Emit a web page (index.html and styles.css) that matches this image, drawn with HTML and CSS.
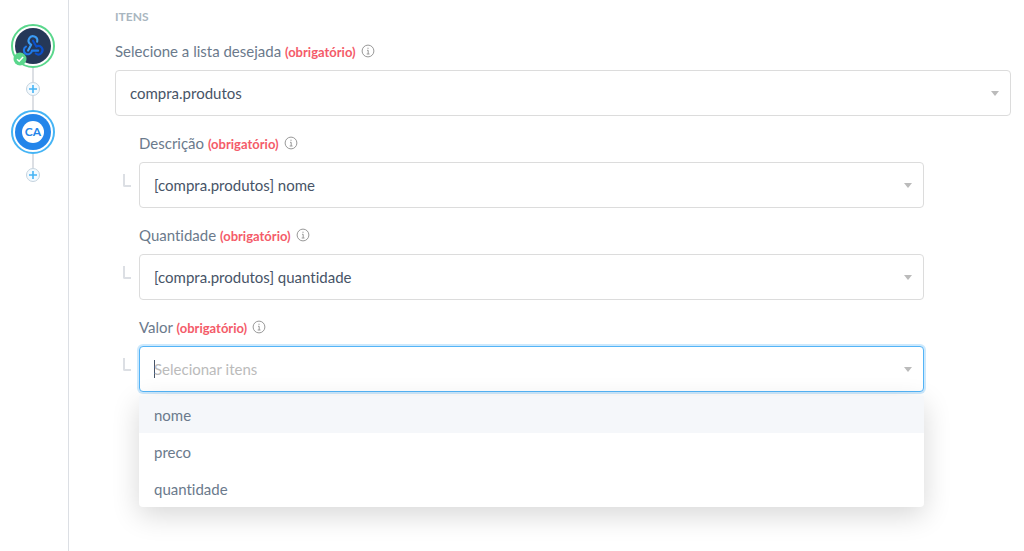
FILE: index.html
```html
<!DOCTYPE html>
<html lang="pt-BR">
<head>
    <meta charset="UTF-8">
    <meta name="viewport" content="width=device-width, initial-scale=1.0">
    <title>Itens</title>
    <link rel="stylesheet" href="styles.css">
</head>
<body>
<aside class="steps">
    <div class="step step-done">
        <svg class="step-icon" viewBox="0 0 38 38">
            <circle cx="19" cy="19" r="19" fill="#253858"/>
            <g fill="none" stroke-width="2.2" stroke-linecap="round" stroke-linejoin="round">
                <path d="M23.4 14.4a4.6 4.6 0 1 0-7.2 2.6l.9.8-3.3 6" stroke="#3b9cf5"/>
                <path d="M11.6 19.6a4.3 4.3 0 1 0 6.3 4.3h6.5" stroke="#1f78e8"/>
                <path d="M19 13.4l3.5 6.2a4.4 4.4 0 1 1-.6 7.3" stroke="#0b50cc"/>
            </g>
        </svg>
        <svg class="step-check" viewBox="0 0 14 14">
            <circle cx="7" cy="7" r="6.5" fill="#5ad78c"/>
            <path d="M4 7.2l2.2 2.1 3.9-4.2" fill="none" stroke="#fff" stroke-width="1.5"/>
        </svg>
    </div>
    <div class="line"></div>
    <button type="button" class="add" aria-label="Adicionar">
        <svg viewBox="0 0 12 12"><path d="M6 2v8M2 6h8" stroke="#45b4f5" stroke-width="1.6"/></svg>
    </button>
    <div class="line"></div>
    <div class="step step-active">
        <div class="step-logo"><span>CA</span></div>
    </div>
    <div class="line"></div>
    <button type="button" class="add" aria-label="Adicionar">
        <svg viewBox="0 0 12 12"><path d="M6 2v8M2 6h8" stroke="#45b4f5" stroke-width="1.6"/></svg>
    </button>
</aside>

<main class="content">
    <h2>ITENS</h2>

    <div class="field">
        <div class="field-label">
            <label for="lista">Selecione a lista desejada <strong>(obrigatório)</strong></label>
            <svg class="info" viewBox="0 0 14 14"><circle cx="7" cy="7" r="5.9"/><path d="M6 6.3h1.2V10M5.7 10h2.8M7 3.7v1.2"/></svg>
        </div>
        <div class="control">
            <select id="lista">
                <option>compra.produtos</option>
            </select>
        </div>
    </div>

    <div class="children">
        <div class="field">
            <div class="field-label">
                <label for="descricao">Descrição <strong>(obrigatório)</strong></label>
                <svg class="info" viewBox="0 0 14 14"><circle cx="7" cy="7" r="5.9"/><path d="M6 6.3h1.2V10M5.7 10h2.8M7 3.7v1.2"/></svg>
            </div>
            <div class="control nested">
                <select id="descricao">
                    <option>[compra.produtos] nome</option>
                </select>
            </div>
        </div>

        <div class="field">
            <div class="field-label">
                <label for="quantidade">Quantidade <strong>(obrigatório)</strong></label>
                <svg class="info" viewBox="0 0 14 14"><circle cx="7" cy="7" r="5.9"/><path d="M6 6.3h1.2V10M5.7 10h2.8M7 3.7v1.2"/></svg>
            </div>
            <div class="control nested">
                <select id="quantidade">
                    <option>[compra.produtos] quantidade</option>
                </select>
            </div>
        </div>

        <div class="field">
            <div class="field-label">
                <label for="valor">Valor <strong>(obrigatório)</strong></label>
                <svg class="info" viewBox="0 0 14 14"><circle cx="7" cy="7" r="5.9"/><path d="M6 6.3h1.2V10M5.7 10h2.8M7 3.7v1.2"/></svg>
            </div>
            <div class="control nested open">
                <input type="text" id="valor" placeholder="Selecionar itens" role="combobox" aria-expanded="true" aria-controls="valor-opcoes" autocomplete="off">
                <ul class="menu" id="valor-opcoes" role="listbox">
                    <li class="selected" role="option" aria-selected="true">nome</li>
                    <li role="option">preco</li>
                    <li role="option">quantidade</li>
                </ul>
            </div>
        </div>
    </div>
</main>
</body>
</html>
```
FILE: styles.css
```css
* {
    box-sizing: border-box;
}

body {
    display: flex;
    min-height: 100vh;
    margin: 0;
    background: #fff;
    color: #6b7a8c;
    font-family: Lato, 'Liberation Sans', sans-serif;
    font-size: 15px;
    font-variant-ligatures: none;
    line-height: 20px;
}

/* steps */
.steps {
    display: flex;
    flex: none;
    flex-direction: column;
    align-items: center;
    width: 69px;
    padding: 24px 2px 0 0;
    border-right: 1px solid #dcdfe4;
}

.step {
    position: relative;
    width: 44px;
    height: 44px;
    padding: 2px;
    border: 2px solid #5ad78c;
    border-radius: 50%;
}

.step-active {
    border-color: #45b4f5;
}

.step-icon {
    display: block;
    width: 100%;
    height: 100%;
}

.step-check {
    position: absolute;
    left: 0;
    bottom: 0;
    width: 14px;
    height: 14px;
}

.step-logo {
    display: flex;
    align-items: center;
    justify-content: center;
    height: 100%;
    border-radius: 50%;
    background: #2385ea;
}

.step-logo span {
    width: 22px;
    border-radius: 50%;
    background: #fff;
    color: #2385ea;
    font-size: 12px;
    font-weight: bold;
    line-height: 22px;
    text-align: center;
}

.line {
    width: 2px;
    height: 14px;
    background: #dcdfe4;
}

.add {
    width: 14px;
    height: 14px;
    padding: 0;
    border: 1px solid #c5d3de;
    border-radius: 50%;
    background: #f3faff;
    cursor: pointer;
}

.add svg {
    display: block;
}

/* form */
.content {
    flex: 1;
    padding: 9px 13px 0 46px;
}

h2 {
    margin: 0 0 16px;
    color: #a9b6c0;
    font-size: 12px;
    font-weight: bold;
    line-height: 16px;
}

.field {
    margin-bottom: 17px;
}

.field-label {
    display: flex;
    align-items: center;
    gap: 5px;
    margin-bottom: 9px;
}

.field-label strong {
    color: #f45b69;
    font-size: 13px;
    line-height: 1;
}

.info {
    width: 14px;
    height: 14px;
    fill: none;
    stroke: #999;
}

.children {
    padding: 0 87px 0 24px;
}

.control {
    position: relative;
}

.control::after {
    content: '';
    position: absolute;
    top: 21px;
    right: 12px;
    border: 4px solid transparent;
    border-top: 5px solid #bbb;
    border-bottom: 0;
    pointer-events: none;
}

.nested::before {
    content: '';
    position: absolute;
    top: 12px;
    left: -16px;
    width: 6px;
    height: 11px;
    border: solid #dcdfe4;
    border-width: 0 0 2px 2px;
    border-bottom-left-radius: 2px;
}

select, input {
    display: block;
    width: 100%;
    height: 46px;
    padding: 0 14px;
    border: 1px solid #dcdcdc;
    border-radius: 4px;
    outline: none;
    appearance: none;
    background: #fff;
    color: #475467;
    font: inherit;
    font-variant-ligatures: none;
}

/* the gradient is the text cursor of the open field */
.open input {
    border-color: #54b4f7;
    background: linear-gradient(#475467, #475467) 14px center / 1px 18px no-repeat #fff;
    box-shadow: 0 0 0 2px #cde9fd;
}

input::placeholder {
    color: #bbb;
}

.menu {
    position: absolute;
    top: 50px;
    left: 0;
    right: 0;
    margin: 0;
    padding: 0;
    border-radius: 0 0 4px 4px;
    background: #fff;
    box-shadow: 0 8px 28px rgba(0, 0, 0, 0.16);
    list-style: none;
}

.menu li {
    padding: 9px 15px 8px;
    cursor: pointer;
}

.menu .selected {
    background: #f5f7fa;
}
```
